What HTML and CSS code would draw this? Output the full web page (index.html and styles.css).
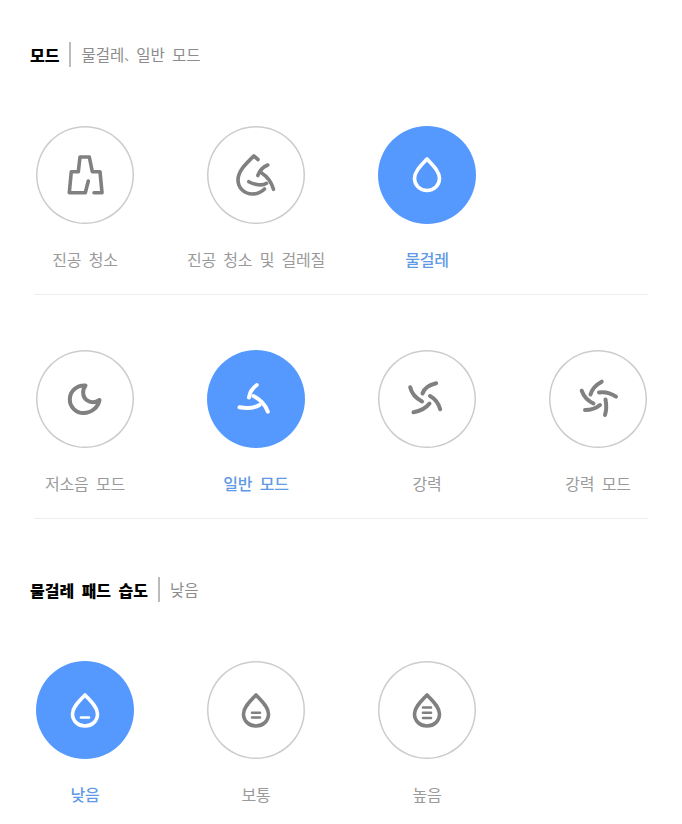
FILE: index.html
```html
<!DOCTYPE html>
<html lang="ko">
<head>
  <meta charset="UTF-8">
  <meta name="viewport" content="width=device-width, initial-scale=1.0">
  <title>모드</title>
  <link rel="stylesheet" href="styles.css">
</head>
<body>
  <main>
    <h2 class="heading">
      <strong>모드</strong>
      <span class="heading-value">물걸레<span class="comma">、</span>일반 모드</span>
    </h2>

    <div class="options">
      <div class="option">
        <div class="circle">
          <svg class="icon" viewBox="19.5 19 60 60"><path d="M52.8 55 49.8 66.7H33.8L35.8 45.7H42.8L44.5 31H53.8L56.8 45.7H64.5L66.5 66.7H58.5"/></svg>
        </div>
        <span class="label">진공 청소</span>
      </div>
      <div class="option">
        <div class="circle">
          <svg class="icon" viewBox="19.5 19 60 60"><path d="M51.5 33.5 47.3 30C40 37 31.5 45 31.5 54 31.5 62 38 68 46 68 51 68 55 66 58 63"/><path d="M61.3 39C56 41 53 45 51.3 49.5"/><path d="M54.5 46.5C60 50 65 56 67 63.3"/><path d="M42.3 55.7C48 59 56 60 60 57.3"/></svg>
        </div>
        <span class="label">진공 청소 및 걸레질</span>
      </div>
      <div class="option active">
        <div class="circle">
          <svg class="icon" viewBox="19.5 19 60 60"><path d="M49.5 33C44 39 37 45 37 52.5 37 59 42.5 64.5 49.5 64.5 56.5 64.5 62 59 62 52.5 62 45 55 39 49.5 33Z"/></svg>
        </div>
        <span class="label">물걸레</span>
      </div>
    </div>

    <div class="options options-second">
      <div class="option">
        <div class="circle">
          <svg class="icon thick" viewBox="19.5 19 60 60"><path d="M50 35.5C41 35 34.3 41.5 34.3 49.5 34.3 57 40.5 63 48 63 56 63 62.5 57.5 64 50 60 52.5 55 53 51 50 47 47 46.5 40 50 35.5Z"/></svg>
        </div>
        <span class="label">저소음 모드</span>
      </div>
      <div class="option active">
        <div class="circle">
          <svg class="icon thick" viewBox="19.5 19 60 60"><path d="M50.3 35C45.5 38.5 43 43 42.5 47.5"/><path d="M47 46C53 49 59 55 61.3 61.7"/><path d="M33 57.3C40 58.5 48 58 53 55"/></svg>
        </div>
        <span class="label">일반 모드</span>
      </div>
      <div class="option">
        <div class="circle">
          <svg class="icon thick" viewBox="19.5 19 60 60"><path d="M32.7 37.3C34 43 38 48 44.5 51.5"/><path d="M58.7 33.3C51 35 46.5 39 45 43.5"/><path d="M62.7 59.3C61 53 58 49 52.5 46"/><path d="M36 62.3C43 61 48.5 58 52 53.5"/></svg>
        </div>
        <span class="label">강력</span>
      </div>
      <div class="option">
        <div class="circle">
          <svg class="icon thick" viewBox="19.5 19 60 60"><path d="M53.2 31.7C47 35 43.5 39 42 44.5"/><path d="M67.5 46.7C62 43 56 41.5 50.5 42.5"/><path d="M56.5 65C58 60 58 54.5 57 49.5"/><path d="M36.5 60C43 60 48 58 51.5 55"/><path d="M33.2 40.7C35 46 38.5 50.5 45 53.5"/></svg>
        </div>
        <span class="label">강력 모드</span>
      </div>
    </div>

    <h2 class="heading heading-second">
      <strong>물걸레 패드 습도</strong>
      <span class="heading-value">낮음</span>
    </h2>

    <div class="options options-last">
      <div class="option active">
        <div class="circle">
          <svg class="icon" viewBox="19.5 19 60 60"><path d="M49.5 34C44 40 37 46 37 53 37 60 42.5 65 49.5 65 56.5 65 62 60 62 53 62 46 55 40 49.5 34Z"/><path class="bar" d="M45.5 56.5H53.5"/></svg>
        </div>
        <span class="label">낮음</span>
      </div>
      <div class="option">
        <div class="circle">
          <svg class="icon" viewBox="19.5 19 60 60"><path d="M49.5 34C44 40 37 46 37 53 37 60 42.5 65 49.5 65 56.5 65 62 60 62 53 62 46 55 40 49.5 34Z"/><path class="bar" d="M45.5 51.7H53.5M45.5 56.5H53.5"/></svg>
        </div>
        <span class="label">보통</span>
      </div>
      <div class="option">
        <div class="circle">
          <svg class="icon" viewBox="19.5 19 60 60"><path d="M49.5 34C44 40 37 46 37 53 37 60 42.5 65 49.5 65 56.5 65 62 60 62 53 62 46 55 40 49.5 34Z"/><path class="bar" d="M45.5 46.5H53.5M45.5 51.7H53.5M45.5 57H53.5"/></svg>
        </div>
        <span class="label">높음</span>
      </div>
    </div>
  </main>
</body>
</html>
```

FILE: styles.css
```css
body {
  background-color: #fff;
  color: #000;
  font-family: "Noto Sans CJK KR", "Noto Sans", sans-serif;
  margin: 0;
  padding: 0;
}
main {
  padding-top: 42px;
}
.heading {
  display: flex;
  align-items: center;
  height: 25px;
  margin: 0 0 59px 30px;
  font-size: 16px;
  font-weight: 700;
  word-spacing: 3px;
}
.heading-second {
  margin-top: 58px;
}
.heading-value {
  margin-left: 10px;
  padding-left: 10px;
  height: 25px;
  line-height: 25px;
  border-left: 2px solid #bbb;
  color: #8c8c8c;
  font-size: 15.5px;
  font-weight: 400;
}
.comma {
  font-size: 12px;
}
.options {
  display: grid;
  grid-template-columns: repeat(4, 98px);
  column-gap: 73px;
  margin: 0 34px;
  padding: 0 0 23px 2px;
  border-bottom: 1px solid #eee;
}
.options-second {
  padding-top: 55px;
}
.options-last {
  border-bottom: none;
}
.option {
  display: flex;
  flex-direction: column;
  align-items: center;
}
.circle {
  width: 98px;
  height: 98px;
  border-radius: 50%;
  box-shadow: inset 0 0 0 1.5px #ccc;
  display: flex;
  align-items: center;
  justify-content: center;
  color: #808080;
}
.icon {
  width: 60px;
  height: 60px;
  flex: none;
  fill: none;
  stroke: currentColor;
  stroke-width: 3.6;
  stroke-linecap: round;
  stroke-linejoin: round;
}
.thick {
  stroke-width: 4;
}
.bar {
  stroke-width: 2.6;
}
.label {
  margin-top: 23px;
  font-size: 16px;
  line-height: 24px;
  color: #9a9a9a;
  white-space: nowrap;
  word-spacing: 3px;
  letter-spacing: -0.2px;
}
.active .circle {
  background-color: #5599ff;
  box-shadow: none;
  color: #fff;
}
.active .label {
  color: #5f9ae6;
  font-weight: 500;
}
```
